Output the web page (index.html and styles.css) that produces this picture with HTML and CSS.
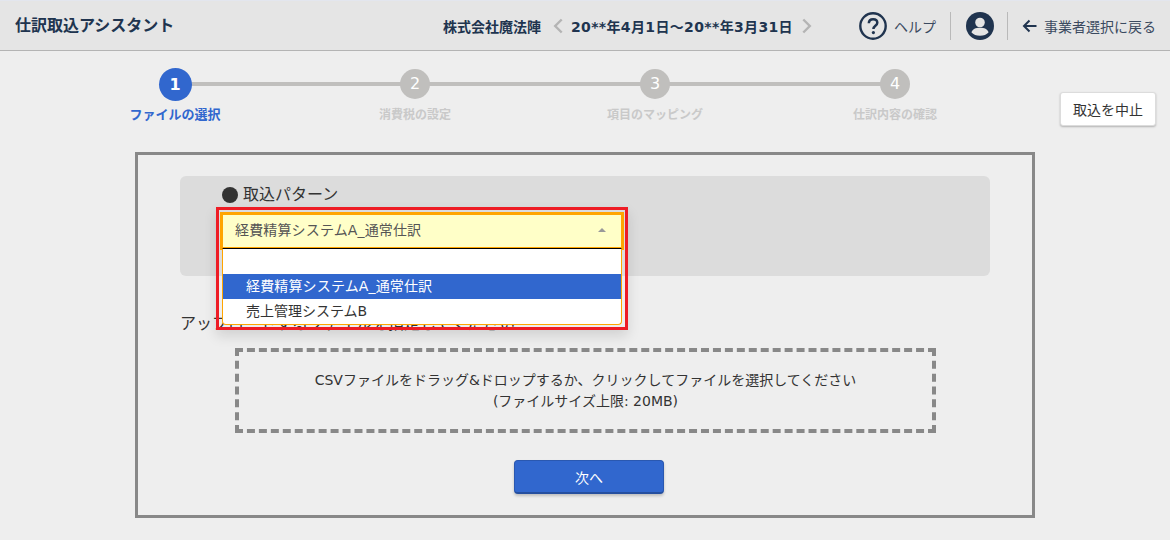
FILE: index.html
```html
<!DOCTYPE html>
<html lang="ja">
<head>
<meta charset="utf-8">
<title>仕訳取込アシスタント</title>
<link rel="stylesheet" href="styles.css">
</head>
<body>
<header class="topbar">
  <h1 class="app-title">仕訳取込アシスタント</h1>
  <div class="period">
    <span class="company">株式会社魔法陣</span>
    <svg class="chev" width="10" height="16" viewBox="0 0 10 16"><path d="M8.700 1.500 2.200 8l6.500 6.500" fill="none" stroke="#b4b4b4" stroke-width="2.400"/></svg>
    <span class="dates">20**年4月1日～20**年3月31日</span>
    <svg class="chev" width="10" height="16" viewBox="0 0 10 16"><path d="M1.300 1.500 7.800 8l-6.500 6.500" fill="none" stroke="#b4b4b4" stroke-width="2.400"/></svg>
  </div>
  <div class="tools">
    <a class="help">
      <svg width="28" height="28" viewBox="0 0 28 28"><circle cx="14" cy="14" r="12.700" fill="none" stroke="#20344f" stroke-width="2.400"/><path d="M9.800 11.300c.1-2.700 1.900-4.100 4.300-4.100 2.500 0 4.200 1.400 4.200 3.500 0 3.100-3.900 3-3.900 6.300" fill="none" stroke="#20344f" stroke-width="2.500"/><circle cx="14.400" cy="20.600" r="1.600" fill="#20344f"/></svg>
      <span>ヘルプ</span>
    </a>
    <span class="sep sep-a"></span>
    <svg class="avatar" width="28" height="28" viewBox="0 0 28 28"><circle cx="14" cy="14" r="14" fill="#20344f"/><circle cx="14" cy="10.500" r="4.800" fill="#e5e5e5"/><path d="M5.500 20.500c1-3.500 4-4.800 8.500-4.800s7.500 1.300 8.500 4.800c-1.800 2-4.800 3.300-8.500 3.300s-6.700-1.300-8.500-3.300z" fill="#e5e5e5"/></svg>
    <span class="sep sep-b"></span>
    <a class="back">
      <svg width="15" height="14" viewBox="0 0 15 14"><path d="M14.500 7H2M7.500 1.500 2 7l5.500 5.500" fill="none" stroke="#20344f" stroke-width="2"/></svg>
      <span>事業者選択に戻る</span>
    </a>
  </div>
</header>

<div class="progress-row">
  <ol class="steps">
    <li class="step step-active"><span class="dot">1</span><span class="step-label">ファイルの選択</span></li>
    <li class="step"><span class="dot">2</span><span class="step-label">消費税の設定</span></li>
    <li class="step"><span class="dot">3</span><span class="step-label">項目のマッピング</span></li>
    <li class="step"><span class="dot">4</span><span class="step-label">仕訳内容の確認</span></li>
  </ol>
  <button class="cancel">取込を中止</button>
</div>

<main class="card">
  <section class="panel">
    <div class="panel-title"><span class="bullet"></span>取込パターン</div>
  </section>
  <p class="upload-label">アップロードするファイルを指定してください</p>
  <div class="dropzone">
    <p>CSVファイルをドラッグ&amp;ドロップするか、クリックしてファイルを選択してください</p>
    <p>(ファイルサイズ上限: 20MB)</p>
  </div>
  <div class="actions"><button class="next">次へ</button></div>

  <div class="callout">
    <div class="select">
      <div class="select-head"><span class="wide">経費精算システムA_通常仕訳</span><span class="caret"></span></div>
      <ul class="options">
        <li class="opt"></li>
        <li class="opt opt-on"><span class="wide">経費精算システムA_通常仕訳</span></li>
        <li class="opt">売上管理システムB</li>
      </ul>
    </div>
  </div>
</main>
</body>
</html>
```

FILE: styles.css
```css
* { box-sizing: border-box; }
html, body { margin: 0; padding: 0; }
body {
  width: 1170px;
  height: 540px;
  overflow: hidden;
  background: #eeeeee;
  color: #333333;
  font-family: "DejaVu Sans", "Noto Sans CJK JP", sans-serif;
  font-size: 14px;
}
.topbar {
  height: 51px;
  display: flex;
  align-items: center;
  background: #e5e5e5;
  border-top: 1px solid #e3e6ee;
  border-bottom: 1px solid #b4b4b4;
  padding-left: 15px;
  color: #20344f;
}
.app-title { margin: 0; width: 428px; font-size: 16px; font-weight: 700; line-height: 24px; }
.period { display: flex; align-items: center; font-size: 14px; font-weight: 700; width: 416px; }
.company { margin-right: 12px; }
.dates { margin: 0 9px 0 8px; letter-spacing: .35px; white-space: nowrap; }
.tools { display: flex; align-items: center; }
.help { display: flex; align-items: center; gap: 7px; font-size: 14px; color: #3b4a60; }
.sep { width: 1px; height: 28px; background: #b9b9b9; }
.sep-a { margin: 0 15px 0 14px; }
.sep-b { margin: 0 14px 0 13px; }
.back { display: flex; align-items: center; gap: 7px; font-size: 14px; color: #3b4a60; }

.progress-row { height: 101px; position: relative; padding: 18px 0 0 55px; display: flex; }
.steps { list-style: none; margin: 0; padding: 0; display: grid; grid-template-columns: repeat(4, 240px); align-items: start; }
.step { position: relative; display: flex; flex-direction: column; align-items: center; }
.step + .step::before {
  content: "";
  position: absolute;
  top: 13px;
  left: -120px;
  width: 240px;
  height: 4px;
  background: #c0bfbd;
}
.dot {
  position: relative;
  z-index: 1;
  width: 30px;
  height: 30px;
  border-radius: 50%;
  background: #c0bfbd;
  color: #fff;
  font-size: 16px;
  line-height: 30px;
  text-align: center;
}
.step-active .dot { width: 33px; height: 33px; margin: -1.5px 0; line-height: 33px; background: #3167ce; font-weight: 700; }
.step-label { margin-top: 7px; font-size: 12px; font-weight: 700; line-height: 18px; color: #c9c9c9; }
.step-active .step-label { color: #3167ce; font-size: 13px; }
.cancel {
  position: absolute;
  top: 41px;
  left: 1060px;
  width: 96px;
  height: 34px;
  padding: 0;
  background: #fff;
  border: 1px solid #dcdcdc;
  border-radius: 3px;
  box-shadow: 0 1px 2px rgba(0,0,0,.25);
  color: #333;
  font: 14px "Noto Sans CJK JP", sans-serif;
}

.card {
  position: relative;
  width: 900px;
  height: 366px;
  margin-left: 135px;
  border: 3px solid #888888;
  padding: 21px 42px 0;
}
.panel { height: 100px; background: #dcdcdc; border-radius: 6px; padding: 7px 0 0 42px; }
.panel-title { display: flex; align-items: center; gap: 5px; font-size: 16px; line-height: 24px; }
.bullet { width: 16px; height: 16px; border-radius: 50%; background: #333; }
.upload-label { margin: 36px 0 0; font-size: 16px; line-height: 24px; }
.dropzone {
  width: 701px;
  height: 85px;
  margin: 12px 0 0 55px;
  border: 4px dashed #888888;
  padding-top: 1px;
  display: flex;
  flex-direction: column;
  justify-content: center;
  align-items: center;
}
.dropzone p { margin: 0; font-size: 14px; line-height: 21px; }
.actions { display: flex; justify-content: center; margin-top: 27px; padding-left: 8px; }
.next {
  width: 150px;
  height: 34px;
  padding: 0;
  background: #3167ce;
  border: 1px solid #2a58b0;
  border-bottom: 2px solid #254f9f;
  border-radius: 4px;
  box-shadow: 0 2px 3px rgba(0,0,0,.2);
  color: #fff;
  font: 14px "Noto Sans CJK JP", sans-serif;
}

.callout {
  position: absolute;
  left: 78px;
  top: 52px;
  width: 412px;
  height: 123px;
  border: 3px solid #ee1c25;
  padding: 2px 1px 0 1px;
  box-shadow: 0 6px 12px rgba(0,0,0,.12);
}
.select { background: linear-gradient(#ffa500, #ffa500) 0 0 / 100% 38px no-repeat; }
.select-head {
  height: 36px;
  display: flex;
  align-items: center;
  justify-content: space-between;
  padding: 0 15px 2px 12px;
  background: #ffffc8;
  border: 3px solid #ffa500;
  border-bottom: 1px solid #ffa500;
  color: #555;
  line-height: 24px;
}
.wide { letter-spacing: .15px; }
.caret { width: 0; height: 0; border: 4px solid transparent; border-top: 0; border-bottom: 4px solid #999; }
.options {
  list-style: none;
  margin: 0 2px;
  padding: 0;
  background: #fff;
  border: 1px solid #ffa500;
  border-top: 1px solid #000;
  border-radius: 0 0 4px 4px;
}
.opt { height: 25px; padding-left: 23px; line-height: 25px; color: #333; }
.opt-on { background: #3167ce; color: #fff; }
```
